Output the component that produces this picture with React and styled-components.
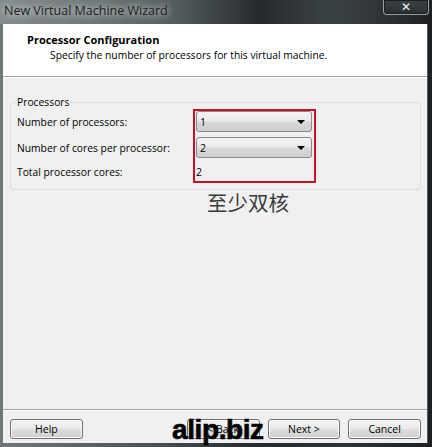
import React from "react";
import styled, { createGlobalStyle } from "styled-components";

const GlobalStyle = createGlobalStyle`
  html, body {
    margin: 0;
    padding: 0;
    background: #1e2324;
  }
  body {
    font-family: "Open Sans", "Noto Sans", sans-serif;
  }
`;

const Window = styled.div`
  width: 432px;
  height: 447px;
  display: flex;
  flex-direction: column;
  background: linear-gradient(90deg, #6f7779 0%, #4b5254 35%, #24292b 60%, #2e3436 80%, #1c2022 100%);
  overflow: hidden;
`;

const TitleBar = styled.div`
  height: 24px;
  display: flex;
  align-items: flex-start;
  justify-content: space-between;
  padding-left: 4px;
  background: linear-gradient(90deg, rgba(150, 158, 160, 0.55) 0%, rgba(120, 128, 130, 0.35) 40%, rgba(40, 46, 48, 0.2) 60%, rgba(90, 98, 100, 0.3) 75%, rgba(20, 24, 26, 0) 100%);
`;

const Title = styled.span`
  margin-top: 3px;
  font-size: 12.5px;
  line-height: 16px;
  color: #1c1c1c;
  text-shadow: 0 0 6px rgba(230, 235, 235, 0.9), 0 0 10px rgba(230, 235, 235, 0.6);
`;

const CloseButton = styled.div`
  width: 44px;
  height: 14px;
  margin-right: 3px;
  border: 1px solid #9aa0a2;
  border-top: none;
  border-radius: 0 0 4px 4px;
  background: linear-gradient(#3b4244, #2a3032);
  box-shadow: inset 0 0 0 1px #1a1e20;
  display: flex;
  align-items: center;
  justify-content: center;
  color: #f4f4f4;
  font-family: "DejaVu Sans", sans-serif;
  font-weight: bold;
  font-size: 12px;
  line-height: 14px;
`;

const Client = styled.div`
  flex: 1;
  margin: 0 4px 4px 3px;
  display: flex;
  flex-direction: column;
  background: #f0f0f0;
  border-right: 1px solid #555c5e;
`;

const Header = styled.div`
  height: 53px;
  box-sizing: border-box;
  background: #ffffff;
  border-bottom: 1px solid #a0a0a0;
  padding: 8px 0 0 24px;
`;

const HeaderTitle = styled.div`
  font-size: 11px;
  font-weight: bold;
  line-height: 15px;
  color: #000;
`;

const HeaderText = styled.div`
  font-size: 10.3px;
  line-height: 15px;
  margin-top: 1px;
  padding-left: 23px;
  color: #000;
`;

const Body = styled.div`
  flex: 1;
  display: flex;
  flex-direction: column;
  border-top: 1px solid #ffffff;
`;

const Group = styled.fieldset`
  margin: 17px 6px 0 7px;
  padding: 0 6px 6px 6px;
  border: 1px solid #d5dfe5;
  border-radius: 3px;
`;

const Legend = styled.legend`
  padding: 0 1px;
  margin-left: -1px;
  font-size: 10.3px;
  line-height: 14px;
  color: #000;
`;

const Rows = styled.div`
  display: flex;
  align-items: flex-start;
`;

const LabelColumn = styled.div`
  width: 176px;
  padding-top: 2px;
  display: flex;
  flex-direction: column;
  gap: 5px;
`;

const Label = styled.div`
  height: ${(p) => p.$h}px;
  display: flex;
  align-items: center;
  font-size: 10.3px;
  color: #000;
`;

const ControlColumn = styled.div`
  width: 116px;
  border: 2px solid #c8102e;
  padding: 0 2px 0 1px;
  display: flex;
  flex-direction: column;
  gap: 5px;
`;

const Select = styled.div`
  height: 21px;
  box-sizing: border-box;
  border: 1px solid #8a8a8a;
  border-radius: 3px;
  background: linear-gradient(#f4f4f4 0%, #e9e9e9 45%, #d8d8d8 55%, #cfcfcf 100%);
  display: flex;
  align-items: center;
  justify-content: space-between;
  padding: 0 6px 0 3px;
  font-size: 10.5px;
  color: #000;
`;

const Arrow = styled.span`
  width: 0;
  height: 0;
  border-left: 4px solid transparent;
  border-right: 4px solid transparent;
  border-top: 4px solid #000;
`;

const Value = styled.div`
  height: 18px;
  display: flex;
  align-items: center;
  font-size: 10.5px;
  color: #000;
`;

const Note = styled.div`
  margin: 0 0 0 204px;
  font-family: "Noto Sans CJK SC", sans-serif;
  font-size: 20.5px;
  line-height: 24px;
  color: #3a3a3a;
`;

const Spacer = styled.div`
  flex: 1;
`;

const Footer = styled.div`
  position: relative;
  height: 34px;
  box-sizing: border-box;
  border-top: 1px solid #a0a0a0;
  box-shadow: inset 0 1px 0 #ffffff;
  display: flex;
  align-items: flex-start;
  padding: 9px 6px 0 7px;
`;

const Button = styled.div`
  width: 73px;
  height: 20px;
  box-sizing: border-box;
  margin-left: ${(p) => p.$gap || 0}px;
  border: 1px solid #707070;
  border-radius: 3px;
  background: linear-gradient(#f2f2f2 0%, #ebebeb 45%, #dddddd 55%, #cfcfcf 100%);
  box-shadow: inset 0 0 0 1px #fcfcfc;
  display: flex;
  align-items: center;
  justify-content: center;
  font-size: 10.5px;
  color: #000;
`;

const Watermark = styled.div`
  position: absolute;
  left: 169px;
  top: 6px;
  font-family: "Liberation Sans", Arial, sans-serif;
  font-weight: bold;
  font-size: 28px;
  line-height: 28px;
  letter-spacing: -0.4px;
  color: #000;
  -webkit-text-stroke: 0.6px #000;
`;

export default function App() {
  return (
    <>
      <GlobalStyle />
      <Window>
        <TitleBar>
          <Title>New Virtual Machine Wizard</Title>
          <CloseButton>✕</CloseButton>
        </TitleBar>
        <Client>
          <Header>
            <HeaderTitle>Processor Configuration</HeaderTitle>
            <HeaderText>Specify the number of processors for this virtual machine.</HeaderText>
          </Header>
          <Body>
            <Group>
              <Legend>Processors</Legend>
              <Rows>
                <LabelColumn>
                  <Label $h={21}>Number of processors:</Label>
                  <Label $h={21}>Number of cores per processor:</Label>
                  <Label $h={18}>Total processor cores:</Label>
                </LabelColumn>
                <ControlColumn>
                  <Select>
                    1<Arrow />
                  </Select>
                  <Select>
                    2<Arrow />
                  </Select>
                  <Value>2</Value>
                </ControlColumn>
              </Rows>
            </Group>
            <Note>至少双核</Note>
            <Spacer />
          </Body>
          <Footer>
            <Button>Help</Button>
            <Button $gap={104}>&lt; Back</Button>
            <Button $gap={8}>Next &gt;</Button>
            <Button $gap={8}>Cancel</Button>
            <Watermark>alip.biz</Watermark>
          </Footer>
        </Client>
      </Window>
    </>
  );
}
